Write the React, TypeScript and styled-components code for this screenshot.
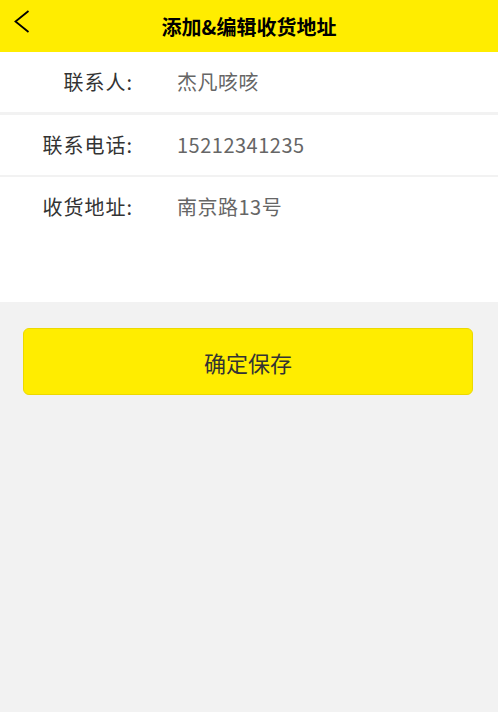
import React from "react";
import styled, { createGlobalStyle } from "styled-components";

const Global = createGlobalStyle`
  html, body { margin: 0; padding: 0; background: #f2f2f2; }
  body { font-family: "Noto Sans CJK SC", "Noto Sans", sans-serif; }
  * { box-sizing: border-box; }
`;

const Page = styled.div`
  width: 498px;
  min-height: 712px;
  background: #f2f2f2;
`;

const Header = styled.header`
  height: 52px;
  background: #ffed00;
  display: grid;
  grid-template-columns: 52px 1fr 52px;
  align-items: center;
`;

const BackButton = styled.button`
  border: 0;
  background: transparent;
  padding: 0 0 8px 13px;
  height: 52px;
  display: flex;
  align-items: center;
  cursor: pointer;
`;

const Title = styled.h1`
  margin: 0;
  text-align: center;
  font-size: 20px;
  font-weight: 700;
  color: #000;
  padding-top: 1px;
`;

const Form = styled.div`
  background: #fff;
  display: flex;
  flex-direction: column;
`;

const Row = styled.div<{ $tall?: boolean; $border?: number }>`
  display: flex;
  align-items: ${(p) => (p.$tall ? "flex-start" : "center")};
  height: ${(p) => (p.$tall ? 125 : 60 + (p.$border || 0))}px;
  padding-top: ${(p) => (p.$tall ? "16px" : "0")};
  border-bottom: ${(p) => (p.$border ? `${p.$border}px solid #f2f2f2` : "none")};
`;

const Label = styled.span`
  width: 133px;
  flex: none;
  text-align: right;
  font-size: 20px;
  letter-spacing: 1px;
  color: #333;
  line-height: 28px;
`;

const Value = styled.span`
  margin-left: 44px;
  font-size: 20px;
  letter-spacing: 0.5px;
  color: #666;
  line-height: 28px;
`;

const Footer = styled.div`
  padding: 26px 25px 26px 23px;
`;

const SaveButton = styled.button`
  width: 100%;
  height: 67px;
  background: #ffed00;
  border: 1px solid #ecd900;
  border-radius: 6px;
  font-family: "Noto Sans CJK SC", sans-serif;
  font-size: 22px;
  color: #333;
  cursor: pointer;
`;

const fields = [
  { label: "联系人:", value: "杰凡咳咳", border: 3 },
  { label: "联系电话:", value: "15212341235", border: 2 },
  { label: "收货地址:", value: "南京路13号", tall: true },
];

export default function App() {
  return (
    <Page>
      <Global />
      <Header>
        <BackButton aria-label="返回">
          <svg width="18" height="24" viewBox="0 0 18 24">
            <path d="M15.5 1 L2.5 11.5 L15.5 22" fill="none" stroke="#000" strokeWidth="1.8" />
          </svg>
        </BackButton>
        <Title>添加&amp;编辑收货地址</Title>
        <span />
      </Header>
      <Form>
        {fields.map((f) => (
          <Row key={f.label} $tall={f.tall} $border={f.border}>
            <Label>{f.label}</Label>
            <Value>{f.value}</Value>
          </Row>
        ))}
      </Form>
      <Footer>
        <SaveButton>确定保存</SaveButton>
      </Footer>
    </Page>
  );
}
